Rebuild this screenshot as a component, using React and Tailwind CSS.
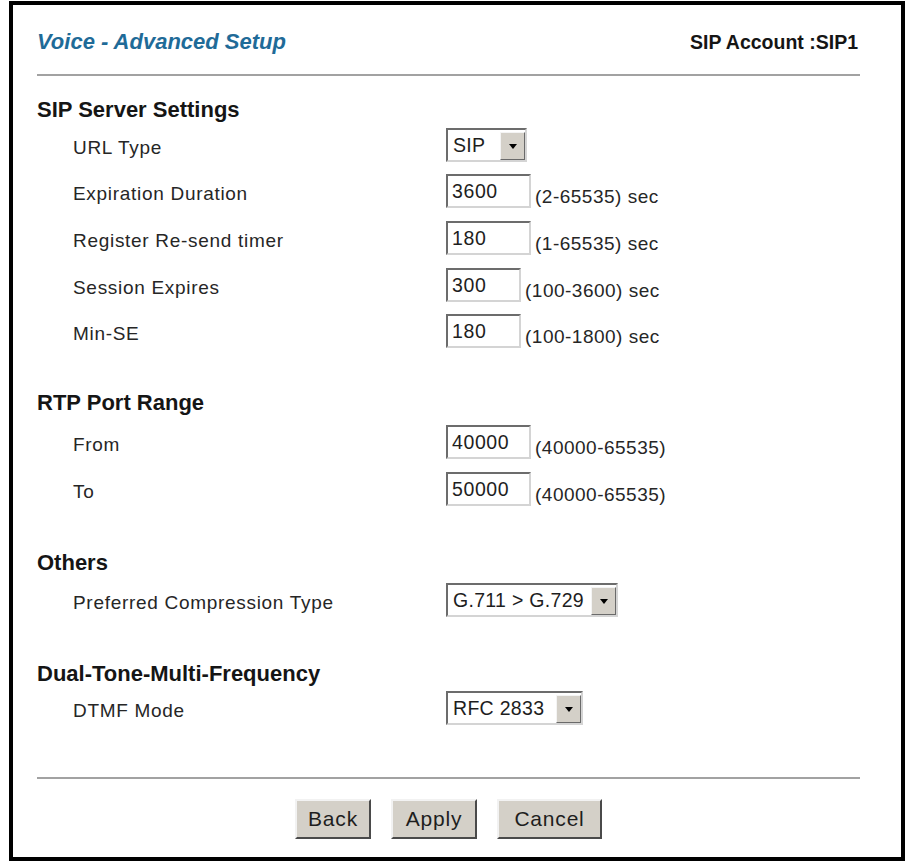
import React from 'react';

const sans = "font-['Liberation_Sans',Arial,sans-serif]";

const Heading = ({ className, children }) => (
  <div className={`h-[26px] leading-[26px] text-[22px] font-bold text-[#151515] ${className}`}>{children}</div>
);

// label cell sits a few px below the box centre, as in the original table
const Row = ({ label, className, children }) => (
  <div className={`flex h-[34px] ${className}`}>
    <div className="w-[409px] pl-[36px] pt-[6px] flex items-center text-[19px] leading-[22px] tracking-[0.7px] text-[#262626]">
      {label}
    </div>
    <div className="flex items-end gap-[4px]">{children}</div>
  </div>
);

const TextBox = ({ value, wide = true, range }) => (
  <>
    <input
      readOnly
      defaultValue={value}
      className={`${wide ? 'w-[85px]' : 'w-[75px]'} h-[34px] border-2 border-t-[#6c6c6c] border-l-[#6c6c6c] border-r-[#d4d4d4] border-b-[#d4d4d4] bg-white pl-[4px] text-[19.5px] tracking-[0.6px] text-[#1e1e1e] outline-none ${sans}`}
    />
    <span className="text-[19px] leading-[22px] tracking-[0.5px] text-[#262626]">{range}</span>
  </>
);

const Select = ({ value, width }) => (
  <div
    className={`${width} h-[34px] border-2 border-t-[#6c6c6c] border-l-[#6c6c6c] border-r-[#d4d4d4] border-b-[#d4d4d4] bg-white flex justify-between`}
  >
    <span className="pl-[5px] self-center text-[19.5px] leading-[22px] tracking-[0.3px] text-[#1e1e1e] whitespace-nowrap">{value}</span>
    <div className="w-[25px] h-[28px] self-end bg-[#d4d0c8] border border-t-[#f4f4f4] border-l-[#f4f4f4] border-r-[#6a6a6a] border-b-[#6a6a6a] flex items-center justify-center">
      <div className="w-0 h-0 border-l-[4px] border-r-[4px] border-t-[5px] border-l-transparent border-r-transparent border-t-black" />
    </div>
  </div>
);

const Button = ({ width, children }) => (
  <button
    className={`${width} h-[40px] bg-[#d4d0c8] border-2 border-t-[#f2f2f2] border-l-[#f2f2f2] border-r-[#4a4a4a] border-b-[#4a4a4a] text-[21px] tracking-[0.8px] text-[#1e1e1e] ${sans}`}
  >
    {children}
  </button>
);

export default function App() {
  return (
    <div className={`w-[912px] h-[862px] bg-white pt-[1px] pl-[9px] ${sans}`}>
      <div className="w-[896px] h-[860px] border-4 border-black pl-[24px] pr-[41px] flex flex-col">
        {/* header */}
        <div className="mt-[24px] h-[26px] flex items-center justify-between">
          <span className="text-[22px] leading-[26px] font-bold italic text-[#1f6b98]">Voice - Advanced Setup</span>
          <span className="pr-[2px] text-[19.5px] leading-[26px] font-bold text-[#151515]">SIP Account :SIP1</span>
        </div>
        <div className="mt-[19px] h-[2px] bg-[#a2a2a2]" />

        <Heading className="mt-[21px]">SIP Server Settings</Heading>
        <Row label="URL Type" className="mt-[5px]">
          <Select value="SIP" width="w-[81px]" />
        </Row>
        <Row label="Expiration Duration" className="mt-[12px]">
          <TextBox value="3600" range="(2-65535) sec" />
        </Row>
        <Row label="Register Re-send timer" className="mt-[13px]">
          <TextBox value="180" range="(1-65535) sec" />
        </Row>
        <Row label="Session Expires" className="mt-[13px]">
          <TextBox value="300" wide={false} range="(100-3600) sec" />
        </Row>
        <Row label="Min-SE" className="mt-[12px]">
          <TextBox value="180" wide={false} range="(100-1800) sec" />
        </Row>

        <Heading className="mt-[42px]">RTP Port Range</Heading>
        <Row label="From" className="mt-[9px]">
          <TextBox value="40000" range="(40000-65535)" />
        </Row>
        <Row label="To" className="mt-[13px]">
          <TextBox value="50000" range="(40000-65535)" />
        </Row>

        <Heading className="mt-[44px]">Others</Heading>
        <Row label="Preferred Compression Type" className="mt-[7px]">
          <Select value="G.711 > G.729" width="w-[172px]" />
        </Row>

        <Heading className="mt-[44px]">Dual-Tone-Multi-Frequency</Heading>
        <Row label="DTMF Mode" className="mt-[4px]">
          <Select value="RFC 2833" width="w-[137px]" />
        </Row>

        <div className="mt-[52px] h-[2px] bg-[#a2a2a2]" />
        <div className="mt-[20px] flex justify-center gap-[20px]">
          <Button width="w-[76px]">Back</Button>
          <Button width="w-[86px]">Apply</Button>
          <Button width="w-[105px]">Cancel</Button>
        </div>
      </div>
    </div>
  );
}
